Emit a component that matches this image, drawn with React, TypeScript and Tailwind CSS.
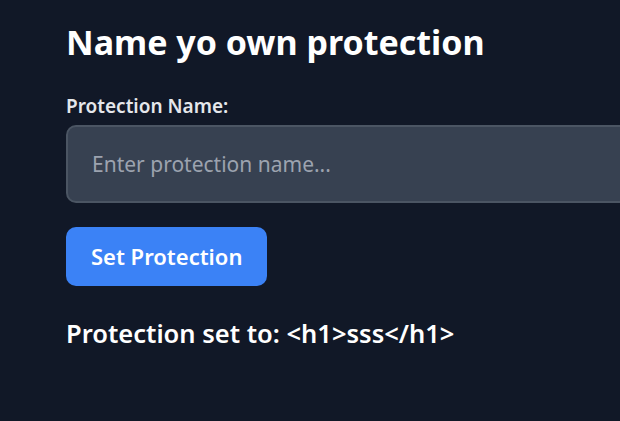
import { useState } from "react";

export default function App() {
  const [name, setName] = useState("");
  const [saved] = useState("<h1>sss</h1>");

  return (
    <div
      className="min-h-screen w-full overflow-hidden bg-[#111827] text-white"
      style={{ fontFamily: '"Noto Sans", "Open Sans", sans-serif' }}
    >
      <div className="pl-[66px] pt-[22px]">
        <h1 className="text-[34px] font-bold leading-[40px]">Name yo own protection</h1>

        <label className="mt-[32px] block text-[19px] font-semibold leading-6 text-[#e5e7eb]">
          Protection Name:
        </label>
        <input
          value={name}
          onChange={(e) => setName(e.target.value)}
          placeholder="Enter protection name..."
          className="mt-[7px] block h-[78px] w-[640px] rounded-[10px] border-2 border-[#4b5563] bg-[#374151] px-[24px] text-[21px] text-white placeholder:text-[#9ca3af] outline-none"
        />

        <button className="mt-6 flex h-[59px] items-center rounded-[10px] bg-[#3b82f6] px-[25px] text-[22px] font-semibold text-white">
          Set Protection
        </button>

        <p className="mt-[31px] text-[25.5px] font-semibold leading-8">Protection set to: {saved}</p>
      </div>
    </div>
  );
}
